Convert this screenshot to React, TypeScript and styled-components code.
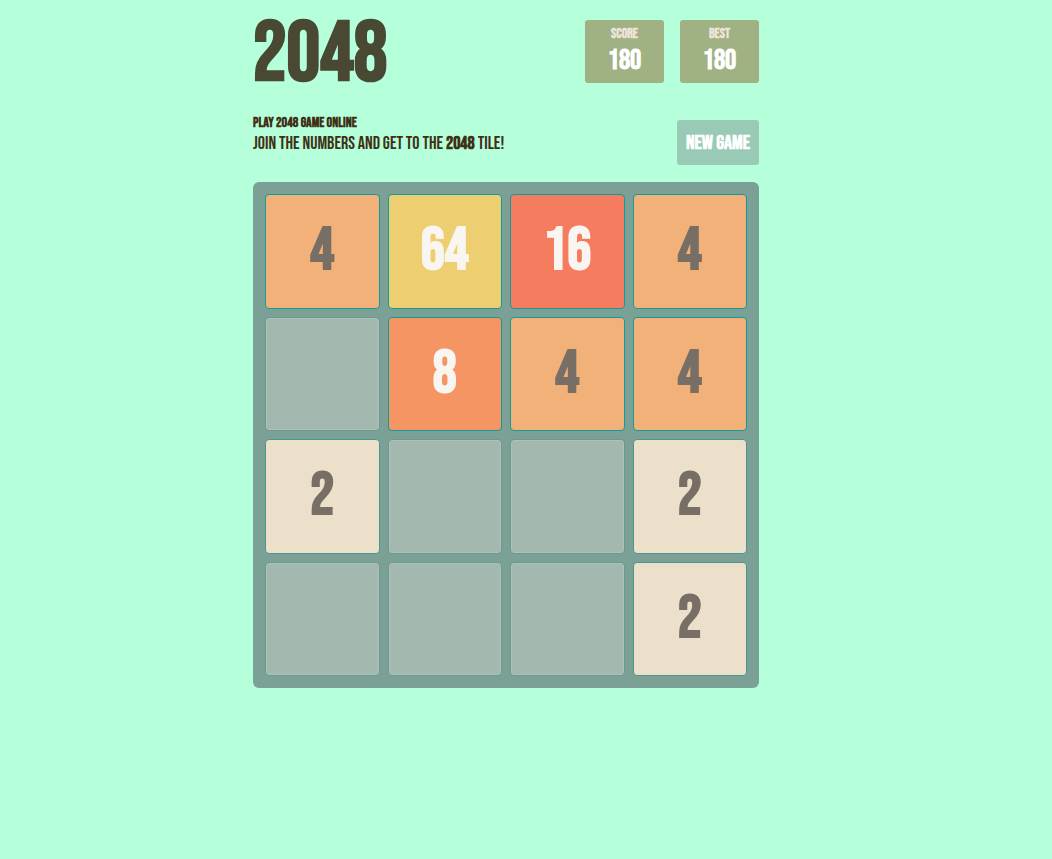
import React, { useState } from "react";
import styled, { createGlobalStyle } from "styled-components";

const GlobalStyle = createGlobalStyle`
  *, *::before, *::after { box-sizing: border-box; }
  body {
    margin: 0;
    background: #b5ffdb;
    color: #3f3015;
    font-family: "Bebas Neue", "Liberation Sans Narrow", "Liberation Sans", sans-serif;
    text-transform: uppercase;
  }
`;

const Page = styled.div`
  display: flex;
  justify-content: center;
  padding: 20px 40px 40px 0;
`;

const Container = styled.main`
  width: 100%;
  max-width: 506px;
`;

const Header = styled.header`
  display: flex;
  justify-content: space-between;
  align-items: flex-start;
`;

const Title = styled.h1`
  margin: 0;
  font-size: 84px;
  line-height: 70px;
  font-weight: 700;
  color: #484833;
`;

const Scores = styled.div`
  display: flex;
  gap: 16px;
`;

const ScoreBox = styled.div`
  display: flex;
  flex-direction: column;
  align-items: center;
  width: 79px;
  height: 63px;
  padding-top: 6px;
  border-radius: 3px;
  background: #a0b183;
  font-weight: 700;
`;

const ScoreLabel = styled.span`
  font-size: 14px;
  line-height: 16px;
  color: #eee4da;
`;

const ScoreValue = styled.span`
  font-size: 28px;
  line-height: 38px;
  color: #fff;
`;

const Intro = styled.section`
  display: flex;
  justify-content: space-between;
  align-items: flex-start;
  margin-top: 23px;
  padding-bottom: 17px;
`;

const Subtitle = styled.h2`
  margin: 0;
  font-size: 14px;
  line-height: 20px;
  font-weight: 700;
`;

const Tagline = styled.p`
  margin: 0;
  font-size: 18px;
  line-height: 22px;
`;

const NewGame = styled.button`
  height: 45px;
  margin-top: 7px;
  padding: 0 9px;
  border: 0;
  border-radius: 3px;
  background: #98cab5;
  color: #fff;
  font: inherit;
  font-size: 20px;
  font-weight: 700;
  text-transform: inherit;
  white-space: nowrap;
  cursor: pointer;
`;

const Board = styled.div`
  display: grid;
  grid-template-columns: repeat(4, minmax(0, 1fr));
  gap: 8px;
  padding: 12px;
  border-radius: 6px;
  background: #7ba096;
`;

const tileColors: Record<number, string> = {
  0: "#a3b8ae",
  2: "#ece0ca",
  4: "#f2b179",
  8: "#f59563",
  16: "#f67c5f",
  64: "#edcf72",
};

const borderColor = (value: number) =>
  value === 0 ? "#6b998f" : value === 2 ? "#4b978e" : "#129a98";

const Tile = styled.div<{ $value: number }>`
  display: flex;
  align-items: center;
  justify-content: center;
  aspect-ratio: 1;
  border: 1px solid ${({ $value }) => borderColor($value)};
  border-radius: 4px;
  background: ${({ $value }) => tileColors[$value]};
  box-shadow: ${({ $value }) => ($value === 0 ? "inset 0 0 0 1px #adc2b8" : "none")};
  color: ${({ $value }) => ($value > 4 ? "#f9f6f2" : "#776e65")};
  font-size: 60px;
  line-height: 64px;
  font-weight: 700;
`;

const startCells = [4, 64, 16, 4, 0, 8, 4, 4, 2, 0, 0, 2, 0, 0, 0, 2];
const freshCells = [0, 0, 0, 2, 0, 0, 0, 0, 0, 2, 0, 0, 0, 0, 0, 0];

export default function App() {
  const [cells, setCells] = useState(startCells);
  const [score, setScore] = useState(180);

  const restart = () => {
    setCells(freshCells);
    setScore(0);
  };

  return (
    <>
      <GlobalStyle />
      <Page>
        <Container>
          <Header>
            <Title>2048</Title>
            <Scores>
              <ScoreBox>
                <ScoreLabel>Score</ScoreLabel>
                <ScoreValue>{score}</ScoreValue>
              </ScoreBox>
              <ScoreBox>
                <ScoreLabel>Best</ScoreLabel>
                <ScoreValue>180</ScoreValue>
              </ScoreBox>
            </Scores>
          </Header>
          <Intro>
            <div>
              <Subtitle>Play 2048 game online</Subtitle>
              <Tagline>
                Join the numbers and get to the <strong>2048</strong> tile!
              </Tagline>
            </div>
            <NewGame type="button" onClick={restart}>New Game</NewGame>
          </Intro>
          <Board>
            {cells.map((value, index) => (
              <Tile key={index} $value={value}>{value || null}</Tile>
            ))}
          </Board>
        </Container>
      </Page>
    </>
  );
}
